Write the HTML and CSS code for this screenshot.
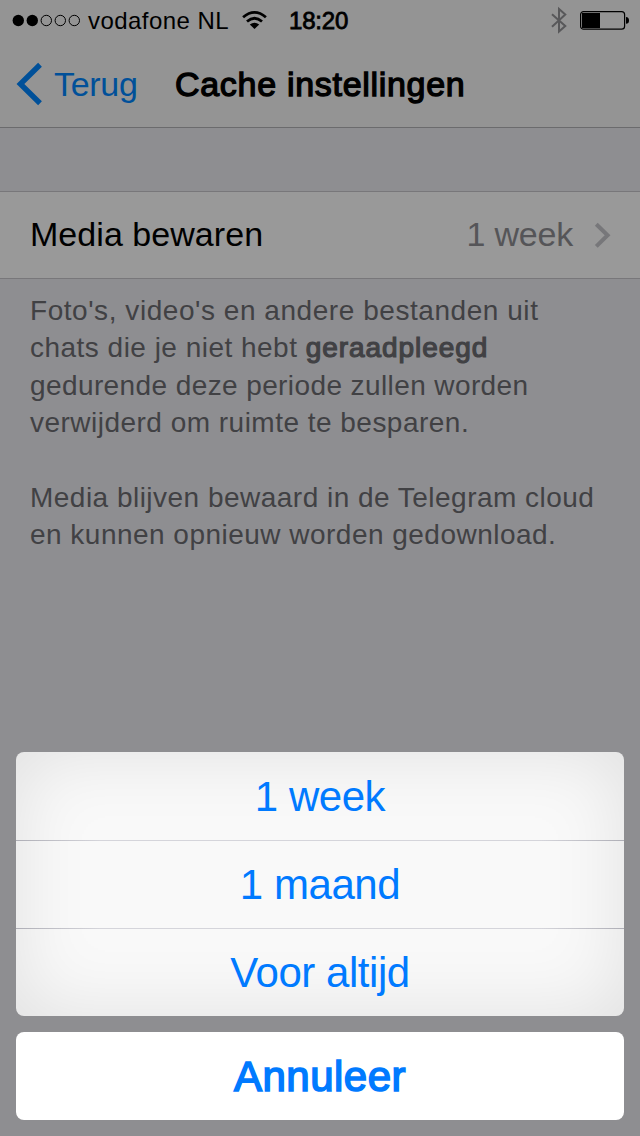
FILE: index.html
```html
<!DOCTYPE html>
<html lang="nl">
<head>
<meta charset="utf-8">
<title>Cache instellingen</title>
<link rel="stylesheet" href="styles.css">
</head>
<body>
<div class="screen">
  <header class="header">
    <div class="status">
      <svg class="signal" width="70" height="14" viewBox="0 0 70 14"><circle cx="6.3" cy="7.5" r="5.7"/><circle cx="20.3" cy="7.5" r="5.7"/><g fill="none" stroke="#000" stroke-width="1"><circle cx="34.3" cy="7.5" r="5.2"/><circle cx="48.3" cy="7.5" r="5.2"/><circle cx="62.3" cy="7.5" r="5.2"/></g></svg>
      <span class="carrier">vodafone NL</span>
      <svg class="wifi" width="26" height="20" viewBox="0 0 26 20"><g fill="none" stroke="#000" stroke-width="2.8"><path d="M1.1 7.2Q12.5 -2.5 23.9 7.2"/><path d="M5 11.5Q12.5 5.1 20 11.5"/></g><path d="M7.8 14.4Q12.5 10.9 17.2 14.4L12.5 19Z"/></svg>
      <span class="clock">18:20</span>
      <svg class="bluetooth" width="18" height="28" viewBox="0 0 18 28"><path d="M2 8.2L15.3 20L9 25.6V3L15.3 8.5L2 20.8" fill="none" stroke="#58585a" stroke-width="2"/></svg>
      <svg class="battery" width="50" height="20" viewBox="0 0 50 20"><rect x=".6" y="1.6" width="44" height="17.6" rx="3" fill="none" stroke="#000" stroke-width="1.2"/><rect x="2" y="3" width="18" height="15"/><path d="M46 7Q49 7.2 49 10.4T46 13.8Z"/></svg>
    </div>
    <nav class="nav">
      <svg class="back" width="28" height="44" viewBox="0 0 28 44"><path d="M25 2.8L5.4 22L25 41.2" fill="none" stroke="#005099" stroke-width="5.4"/></svg>
      <span class="back-label">Terug</span>
      <h1 class="title">Cache instellingen</h1>
    </nav>
  </header>
  <main class="content">
    <div class="row">
      <span class="row-label">Media bewaren</span>
      <span class="row-value">1 week</span>
      <svg class="chevron" width="18" height="28" viewBox="0 0 18 28"><path d="M2.3 3.2L13.6 14.3L2.3 25.4" fill="none" stroke="#77777a" stroke-width="4"/></svg>
    </div>
    <div class="note">
      <p><span class="loose">Foto's, video's en andere bestanden uit</span><br><span>chats die je niet hebt <b>geraadpleegd</b></span><br><span class="tight">gedurende deze periode zullen worden</span><br><span>verwijderd om ruimte te besparen.</span></p>
      <p><span>Media blijven bewaard in de Telegram cloud</span><br><span>en kunnen opnieuw worden gedownload.</span></p>
    </div>
  </main>
  <footer class="sheet">
    <div class="options">
      <div class="option">1 week</div>
      <div class="option">1 maand</div>
      <div class="option">Voor altijd</div>
    </div>
    <div class="cancel">Annuleer</div>
  </footer>
</div>
</body>
</html>
```
FILE: styles.css
```css
* { box-sizing: border-box; }
body { margin: 0; font-family: "Liberation Sans", Arial, sans-serif; color: #000; }
svg { display: block; flex: none; }
span { white-space: nowrap; }
.screen { display: flex; flex-direction: column; width: 640px; height: 1136px; overflow: hidden; background: #8e8e91; }
.header { height: 128px; background: #949494; border-bottom: 1px solid #6b6b6d; }
.status { display: flex; align-items: center; height: 40px; padding-left: 12px; font-size: 24px; line-height: 40px; }
.carrier { width: 142px; margin-left: 6px; letter-spacing: .45px; padding-top: 2px; }
.wifi { margin-left: 12px; }
.clock { width: 60px; margin-left: 21px; -webkit-text-stroke: .8px currentColor; padding-top: 2px; letter-spacing: -.2px; }
.bluetooth { margin-left: 201px; }
.battery { margin-left: 12px; }
.nav { display: flex; align-items: center; height: 88px; padding-left: 15px; font-size: 34px; line-height: 88px; }
.back-label { width: 84px; margin-left: 11px; color: #005099; letter-spacing: -.3px; }
/* Medium weight: regular letterforms thickened with a thin stroke */
.title { margin: 0 0 0 37px; font-size: 34px; font-weight: normal; -webkit-text-stroke: 1.3px currentColor; white-space: nowrap; letter-spacing: .7px; }
.content { flex: 1; padding-top: 63px; }
.row { display: flex; align-items: center; height: 88px; padding: 0 28px 0 30px; background: #999; border-top: 1px solid #78777a; border-bottom: 1px solid #78777a; font-size: 34px; line-height: 84px; }
.row-label { flex: 1; align-self: flex-start; letter-spacing: .05px; }
.row-value { align-self: flex-start; color: #555558; letter-spacing: -.2px; }
.chevron { margin-left: 21px; }
.note { padding: 13px 0 0 30px; color: #414144; font-size: 28px; line-height: 37.4px; letter-spacing: .48px; }
.note p { margin: 0 0 37.4px; }
.note b { font-weight: normal; -webkit-text-stroke: 1.2px currentColor; letter-spacing: .95px; }
.loose { letter-spacing: .55px; }
.tight { letter-spacing: .4px; }
.sheet { padding: 0 16px 16px; }
.options { border-radius: 8px; background: #f9f9f9; box-shadow: inset 0 0 75px rgba(0, 0, 0, .1); overflow: hidden; }
.option, .cancel { height: 88px; text-align: center; font-size: 42px; line-height: 90px; color: #007aff; letter-spacing: -.45px; }
.option + .option { line-height: 88px; border-top: 1px solid; border-image: linear-gradient(90deg, #aeaeb6, #d5d5db 14%, #d5d5db 86%, #aeaeb6) 1; }
.sheet .cancel { margin-top: 16px; border-radius: 8px; background: #fff; -webkit-text-stroke: 1.6px currentColor; letter-spacing: .5px; }
```
